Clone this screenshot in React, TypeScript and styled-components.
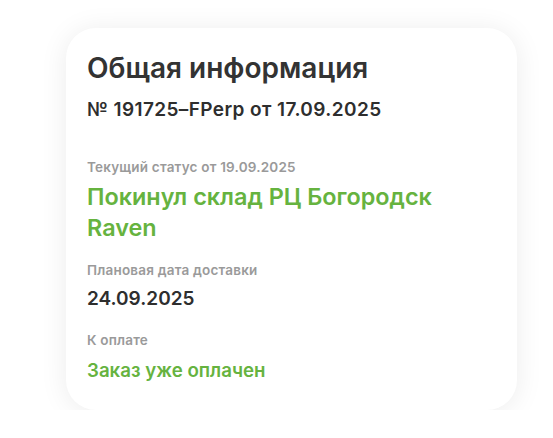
import React from "react";
import styled, { createGlobalStyle } from "styled-components";

const Global = createGlobalStyle`
  html, body { margin: 0; padding: 0; background: #ffffff; }
  body { font-family: Inter, "Noto Sans", sans-serif; }
`;

const Page = styled.div`
  padding: 28px 0 0 66px;
`;

const Card = styled.section`
  width: 451px;
  box-sizing: border-box;
  padding: 22px 21px 27px;
  background: #ffffff;
  border-radius: 30px;
  box-shadow: 0 2px 28px rgba(0, 0, 0, 0.08);
`;

const Title = styled.h1`
  margin: 0;
  font-size: 28px;
  line-height: 36px;
  font-weight: 600;
  color: #333333;
`;

const OrderNo = styled.div`
  margin-top: 12px;
  font-size: 19px;
  line-height: 24px;
  font-weight: 600;
  color: #2e2e2e;
  letter-spacing: 0.4px;
`;

const Label = styled.div<{ $gap: number }>`
  margin-top: ${(p) => p.$gap}px;
  font-size: 13.5px;
  line-height: 18px;
  font-weight: 600;
  color: #9a9a9a;
  letter-spacing: 0.2px;
`;

const Value = styled.div<{ $gap: number; $green?: boolean; $size: number; $lh: number }>`
  margin-top: ${(p) => p.$gap}px;
  font-size: ${(p) => p.$size}px;
  line-height: ${(p) => p.$lh}px;
  font-weight: 600;
  color: ${(p) => (p.$green ? "#66b33f" : "#2e2e2e")};
`;

export default function App() {
  return (
    <>
      <Global />
      <Page>
        <Card>
          <Title>Общая информация</Title>
          <OrderNo>№ 191725–FPerp от 17.09.2025</OrderNo>
          <Label $gap={36}>Текущий статус от 19.09.2025</Label>
          <Value $gap={5} $green $size={23.4} $lh={31}>
            Покинул склад РЦ Богородск
            <br />
            Raven
          </Value>
          <Label $gap={18}>Плановая дата доставки</Label>
          <Value $gap={8} $size={19} $lh={24}>24.09.2025</Value>
          <Label $gap={20}>К оплате</Label>
          <Value $gap={10} $green $size={18.7} $lh={24}>Заказ уже оплачен</Value>
        </Card>
      </Page>
    </>
  );
}
